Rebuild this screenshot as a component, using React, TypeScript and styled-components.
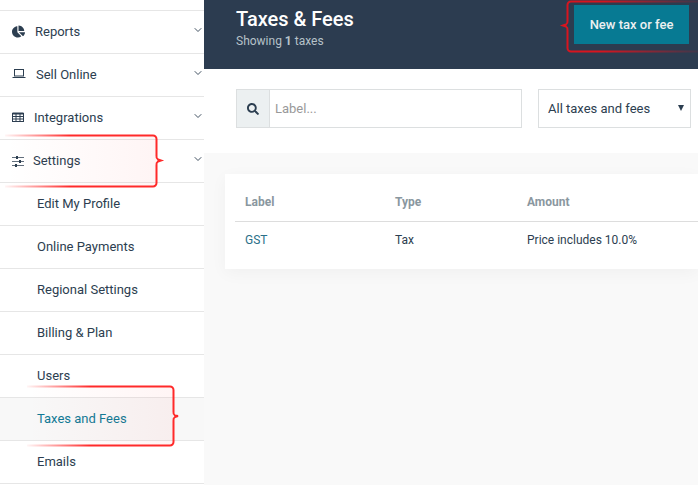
import styled, { createGlobalStyle } from "styled-components";
import { FaChartPie, FaSearch } from "react-icons/fa";
import { ChevronDown } from "lucide-react";

const GlobalStyle = createGlobalStyle`
    html, body {
        margin: 0;
        padding: 0;
        height: 100%;
        overflow: hidden;
        background: #fff;
        font-family: Roboto, "Liberation Sans", sans-serif;
        color: #2c3e50;
    }
`;

const Page = styled.div`
    position: relative;
    display: flex;
    width: 698px;
    height: 485px;
    overflow: hidden;
`;

const Sidebar = styled.nav`
    flex: 0 0 204px;
    background: #fff;
`;

const TopGap = styled.div`
    height: 10px;
    border-bottom: 1px solid #e6e6e6;
`;

const MenuRow = styled.div<{ $active?: boolean; $sub?: boolean }>`
    display: flex;
    align-items: center;
    box-sizing: border-box;
    height: 43px;
    border-bottom: 1px solid #e6e6e6;
    padding: 0 0 2px ${(p) => (p.$sub ? "37px" : "12px")};
    font-size: 13px;
    color: ${(p) => (p.$active ? "#0f7a96" : "#2c3e50")};
    background: ${(p) => (p.$active ? "#f8f8f8" : "#fff")};
`;

const MenuIcon = styled.span`
    display: flex;
    align-items: center;
    color: #2c3e50;
    width: 14px;
    height: 14px;
    flex: none;
`;

const MenuLabel = styled.span<{ $gap: number }>`
    flex: 1;
    margin-left: ${(p) => p.$gap}px;
`;

const Chevron = styled.span`
    display: flex;
    width: 12px;
    margin-top: -3px;
    color: #2c3e50;
`;

const Main = styled.main`
    flex: 1;
    display: flex;
    flex-direction: column;
    min-width: 0;
`;

const Header = styled.header`
    display: flex;
    justify-content: space-between;
    height: 69px;
    padding: 5px 9px 0 32px;
    box-sizing: border-box;
    background: #2c3c50;
`;

const Title = styled.h1`
    margin: 2px 0 0;
    font-size: 20px;
    font-weight: 500;
    line-height: 24px;
    color: #fff;
`;

const Subtitle = styled.p`
    margin: 2px 0 0;
    font-size: 12px;
    line-height: 16px;
    color: #b6c2c9;
    b {
        font-weight: 700;
    }
`;

const NewButton = styled.button`
    width: 115px;
    height: 39px;
    border: none;
    padding: 0;
    background: #077a93;
    color: #ecf0f1;
    font-family: inherit;
    font-size: 13px;
    font-weight: 500;
`;

const Filters = styled.div`
    display: flex;
    gap: 16px;
    height: 84px;
    padding: 20px 7px 0 32px;
    box-sizing: border-box;
`;

const SearchBox = styled.div`
    display: flex;
    width: 286px;
    height: 39px;
    box-sizing: border-box;
    border: 1px solid #dcdfe0;
`;

const SearchAddon = styled.span`
    display: flex;
    align-items: center;
    justify-content: center;
    width: 32px;
    background: #ecf0f1;
    border-right: 1px solid #dcdfe0;
    color: #2c3e50;
    font-size: 12px;
`;

const SearchInput = styled.input`
    flex: 1;
    min-width: 0;
    border: none;
    outline: none;
    padding: 0 5px;
    font-family: inherit;
    font-size: 13px;
    color: #2c3e50;
    &::placeholder {
        color: #999;
        opacity: 1;
    }
`;

const SelectBox = styled.div`
    display: flex;
    align-items: center;
    justify-content: space-between;
    width: 153px;
    height: 39px;
    box-sizing: border-box;
    border: 1px solid #dcdfe0;
    padding: 0 6px 0 9px;
    font-size: 13px;
    color: #2c3e50;
`;

const Caret = styled.span`
    width: 0;
    height: 0;
    border-left: 3px solid transparent;
    border-right: 3px solid transparent;
    border-top: 6px solid #2c3e50;
    margin-top: -2px;
`;

const Content = styled.section`
    flex: 1;
    background: #f9f9f9;
    padding: 21px 0 0 21px;
`;

const Card = styled.div`
    background: #fff;
    height: 95px;
    padding-left: 10px;
    box-shadow: 0 4px 16px rgba(0, 0, 0, 0.04);
`;

const TableRow = styled.div<{ $head?: boolean }>`
    display: grid;
    grid-template-columns: 150px 132px 1fr;
    align-items: center;
    padding: ${(p) => (p.$head ? "9px 0 0 10px" : "0 0 0 10px")};
    height: ${(p) => (p.$head ? "38px" : "36px")};
    border-bottom: ${(p) => (p.$head ? "1px solid #dddddd" : "none")};
    font-size: 12px;
    font-weight: ${(p) => (p.$head ? 700 : 400)};
    color: ${(p) => (p.$head ? "#8a979f" : "#2c3e50")};
`;

const LinkCell = styled.span`
    color: #2a7088;
`;

const Callout = styled.svg`
    position: absolute;
    pointer-events: none;
    overflow: visible;
`;

const LaptopIcon = () => (
    <svg width="14" height="14" viewBox="0 0 14 14" fill="none" stroke="currentColor" strokeWidth="1">
        <rect x="2.5" y="2.5" width="9" height="6.500" />
        <path d="M0.5 10.500h13" />
    </svg>
);

const GridIcon = () => (
    <svg width="14" height="14" viewBox="0 0 14 14" fill="none" stroke="currentColor" strokeWidth="1">
        <rect x="0.500" y="3.500" width="11" height="8" />
        <path d="M0.500 3.500h11" strokeWidth="2" />
        <path d="M0.500 6.500h11M0.500 9h11M4 3.500v8M8 3.500v8" />
    </svg>
);

const SlidersIcon = () => (
    <svg width="14" height="14" viewBox="0 0 14 14" fill="none" stroke="currentColor" strokeWidth="1">
        <path d="M0 4.500h12M0 8.500h12M0 12.500h12" strokeOpacity="0.75" />
        <path d="M5 3v3M8 7v3M4 11v3" strokeWidth="2" />
    </svg>
);

const topItems = [
    { label: "Reports", icon: <FaChartPie size={13} />, gap: 9 },
    { label: "Sell Online", icon: <LaptopIcon />, gap: 10 },
    { label: "Integrations", icon: <GridIcon />, gap: 8 },
    { label: "Settings", icon: <SlidersIcon />, gap: 7 },
];

const subItems = [
    "Edit My Profile",
    "Online Payments",
    "Regional Settings",
    "Billing & Plan",
    "Users",
    "Taxes and Fees",
    "Emails",
];

function App() {
    return (
        <Page>
            <GlobalStyle />
            <Sidebar>
                <TopGap />
                {topItems.map((item) => (
                    <MenuRow key={item.label}>
                        <MenuIcon>{item.icon}</MenuIcon>
                        <MenuLabel $gap={item.gap}>{item.label}</MenuLabel>
                        <Chevron>
                            <ChevronDown size={12} strokeWidth={1.8} />
                        </Chevron>
                    </MenuRow>
                ))}
                {subItems.map((label) => (
                    <MenuRow key={label} $sub $active={label === "Taxes and Fees"}>
                        {label}
                    </MenuRow>
                ))}
            </Sidebar>
            <Main>
                <Header>
                    <div>
                        <Title>Taxes &amp; Fees</Title>
                        <Subtitle>
                            Showing <b>1</b> taxes
                        </Subtitle>
                    </div>
                    <NewButton>New tax or fee</NewButton>
                </Header>
                <Filters>
                    <SearchBox>
                        <SearchAddon>
                            <FaSearch />
                        </SearchAddon>
                        <SearchInput placeholder="Label..." />
                    </SearchBox>
                    <SelectBox>
                        All taxes and fees
                        <Caret />
                    </SelectBox>
                </Filters>
                <Content>
                    <Card>
                        <TableRow $head>
                            <span>Label</span>
                            <span>Type</span>
                            <span>Amount</span>
                        </TableRow>
                        <TableRow>
                            <LinkCell>GST</LinkCell>
                            <span>Tax</span>
                            <span>Price includes 10.0%</span>
                        </TableRow>
                    </Card>
                </Content>
            </Main>

            <Callout width="698" height="485" style={{ left: 0, top: 0 }}>
                <defs>
                    <linearGradient id="fadeRed" gradientUnits="userSpaceOnUse" x1="5" x2="70" y1="0" y2="0">
                        <stop offset="0" stopColor="#ff3b3b" stopOpacity="0.05" />
                        <stop offset="1" stopColor="#ff2a2a" />
                    </linearGradient>
                    <linearGradient id="fillSettings" gradientUnits="userSpaceOnUse" x1="5" x2="158" y1="0" y2="0">
                        <stop offset="0" stopColor="#ff3030" stopOpacity="0" />
                        <stop offset="1" stopColor="#ff3030" stopOpacity="0.05" />
                    </linearGradient>
                    <linearGradient id="fadeRed2" gradientUnits="userSpaceOnUse" x1="27" x2="90" y1="0" y2="0">
                        <stop offset="0" stopColor="#ff3b3b" stopOpacity="0.05" />
                        <stop offset="1" stopColor="#ff2a2a" />
                    </linearGradient>
                    <linearGradient id="fillTaxes" gradientUnits="userSpaceOnUse" x1="27" x2="174" y1="0" y2="0">
                        <stop offset="0" stopColor="#ff3030" stopOpacity="0" />
                        <stop offset="1" stopColor="#ff3030" stopOpacity="0.05" />
                    </linearGradient>
                    <linearGradient id="fadeDark" gradientUnits="userSpaceOnUse" x1="600" x2="698" y1="0" y2="0">
                        <stop offset="0" stopColor="#d8141e" />
                        <stop offset="1" stopColor="#d8141e" stopOpacity="0.1" />
                    </linearGradient>
                </defs>
                <path
                    d="M5 135.500H153a3.500 3.500 0 0 1 3.500 3.500V156a3.500 3.500 0 0 0 1.500 3.500L161 160.500L158 161.500a3.500 3.500 0 0 0 -1.500 3.500V183a3.500 3.500 0 0 1 -3.500 3.500H5"
                    fill="url(#fillSettings)"
                    stroke="url(#fadeRed)"
                    strokeWidth="2"
                />
                <path
                    d="M27 386.500H170a3.500 3.500 0 0 1 3.500 3.500V412a3.500 3.500 0 0 0 1.500 3.500L178 416L175 417a3.500 3.500 0 0 0 -1.500 3.500V442a3.500 3.500 0 0 1 -3.500 3.500H27"
                    fill="url(#fillTaxes)"
                    stroke="url(#fadeRed2)"
                    strokeWidth="2"
                />
                <path
                    d="M698 1.500H571a3.500 3.500 0 0 0 -3.500 3.500V21a3.500 3.500 0 0 1 -1.500 3.500L563 25.500L566 26.500a3.500 3.500 0 0 1 1.500 3.500V48a3.500 3.500 0 0 0 3.500 3.500H698"
                    fill="none"
                    stroke="url(#fadeDark)"
                    strokeWidth="2"
                />
            </Callout>
        </Page>
    );
}

export default App;
